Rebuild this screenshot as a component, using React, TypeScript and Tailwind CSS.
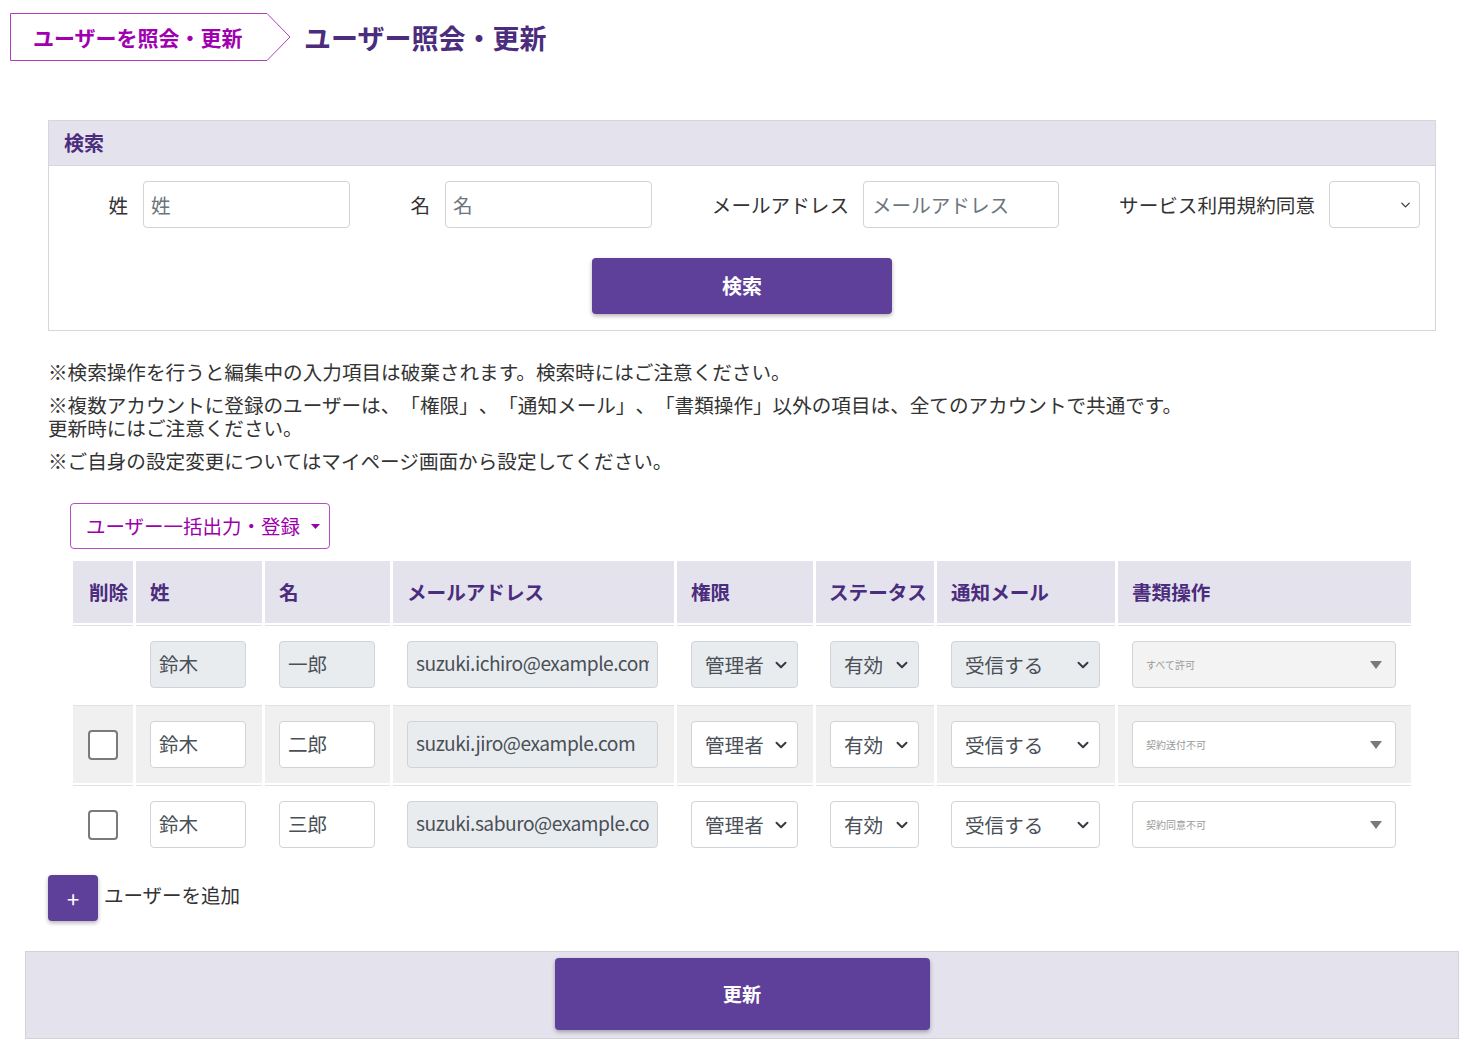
import { ChevronDown } from 'lucide-react';

const purple = 'bg-[#5e3f9a]';

type Row = {
  sei: string;
  mei: string;
  email: string;
  doc: string;
  self?: boolean;
};

const rows: Row[] = [
  { sei: '鈴木', mei: '一郎', email: 'suzuki.ichiro@example.com', doc: 'すべて許可', self: true },
  { sei: '鈴木', mei: '二郎', email: 'suzuki.jiro@example.com', doc: '契約送付不可' },
  { sei: '鈴木', mei: '三郎', email: 'suzuki.saburo@example.com', doc: '契約同意不可' },
];

const cols = 'grid grid-cols-[60px_126px_125px_281px_136px_118px_178px_293px] gap-x-[3px]';

const Select = ({ value, width, disabled }: { value: string; width: string; disabled?: boolean }) => (
  <div className={`relative ${width} h-[47px]`}>
    <select
      disabled={disabled}
      defaultValue={value}
      className={`w-full h-full appearance-none rounded-[4px] border border-[#ced4da] pl-[13px] pr-[30px] text-[19.6px] text-[#495057] outline-none ${disabled ? 'bg-[#e9ecef]' : 'bg-white'}`}
    >
      <option>{value}</option>
    </select>
    <ChevronDown className="absolute right-[8px] top-1/2 -translate-y-1/2 w-[18px] h-[18px] text-[#343a40] pointer-events-none" strokeWidth={2.6} />
  </div>
);

const DocSelect = ({ value, disabled }: { value: string; disabled?: boolean }) => (
  <div
    className={`relative w-[264px] h-[47px] rounded-[4px] border border-[#d3d3d8] flex items-center pl-[13px] ${disabled ? 'bg-[#f3f3f3]' : 'bg-white'}`}
  >
    <span className="text-[10px] text-[#999]">{value}</span>
    <svg className="absolute right-[13px] top-1/2 -translate-y-1/2" width="12" height="8" viewBox="0 0 12 8">
      <polygon points="0,0 12,0 6,8" fill="#7a7a7a" />
    </svg>
  </div>
);

const TextInput = ({
  value,
  width,
  disabled,
  narrow,
}: {
  value: string;
  width: string;
  disabled?: boolean;
  narrow?: boolean;
}) => (
  <input
    defaultValue={value}
    disabled={disabled}
    className={`${width} h-[47px] rounded-[4px] border border-[#ced4da] px-[8px] pb-[3px] text-[#495057] outline-none ${narrow ? 'text-[19.2px] tracking-[-0.5px]' : 'text-[19.6px]'} ${disabled ? 'bg-[#e9ecef]' : 'bg-white'}`}
  />
);

const App = () => {
  return (
    <div className="min-h-screen bg-white text-[#333] font-['Noto_Sans_CJK_JP','Noto_Sans',sans-serif] [text-spacing-trim:space-all]">
      {/* Page header */}
      <header className="flex items-center pl-[10px] pt-[13px]">
        <div className="relative w-[281px] h-[48px]">
          <svg className="absolute inset-0" width="281" height="48" viewBox="0 0 281 48">
            <polygon points="0.5,0.5 257,0.5 280,24 257,47.5 0.5,47.5" fill="none" stroke="#b23dc2" strokeWidth="1" />
          </svg>
          <span className="relative block pl-[23px] leading-[48px] text-[21px] font-bold text-[#a000b0]">
            ユーザーを照会・更新
          </span>
        </div>
        <h1 className="ml-[13px] text-[27px] font-bold text-[#4b2c7d] leading-none">ユーザー照会・更新</h1>
      </header>

      <main className="ml-[25px] w-[1434px] mt-[59px]">
        <div className="px-[23px]">
          {/* Search panel */}
          <section className="border border-[#d6d6dc]">
            <div className="h-[45px] bg-[#e4e3ed] border-b border-[#d6d6dc] flex items-center px-[15px] text-[20px] font-bold text-[#4b2c7d]">
              検索
            </div>
            <div className="pt-[15px] pb-[16px]">
              <div className="flex items-center text-[19.6px]">
                <label className="w-[79px] text-right">姓</label>
                <input placeholder="姓" className="ml-[15px] w-[207px] h-[47px] rounded-[4px] border border-[#ced4da] px-[7px] placeholder:text-[#6c757d] outline-none" />
                <label className="w-[80px] text-right">名</label>
                <input placeholder="名" className="ml-[15px] w-[207px] h-[47px] rounded-[4px] border border-[#ced4da] px-[7px] placeholder:text-[#6c757d] outline-none" />
                <label className="w-[197px] text-right">メールアドレス</label>
                <input placeholder="メールアドレス" className="ml-[14px] w-[196px] h-[47px] rounded-[4px] border border-[#ced4da] px-[8px] placeholder:text-[#6c757d] outline-none" />
                <label className="w-[256px] text-right">サービス利用規約同意</label>
                <div className="relative ml-[14px] w-[91px] h-[47px]">
                  <select className="w-full h-full appearance-none rounded-[4px] border border-[#ced4da] bg-white outline-none">
                    <option></option>
                  </select>
                  <ChevronDown className="absolute right-[7px] top-1/2 -translate-y-1/2 w-[15px] h-[15px] text-[#343a40] pointer-events-none" strokeWidth={2} />
                </div>
              </div>
              <div className="flex justify-center mt-[30px]">
                <button className={`w-[300px] h-[56px] rounded-[4px] ${purple} text-white text-[20px] font-bold shadow-[0_2px_4px_rgba(0,0,0,0.3)]`}>
                  検索
                </button>
              </div>
            </div>
          </section>

          {/* Notes */}
          <div className="mt-[29px] text-[19.6px] leading-[23px] text-[#333]">
            <p className="mb-[10px]">※検索操作を行うと編集中の入力項目は破棄されます。検索時にはご注意ください。</p>
            <p className="mb-[10px]">
              ※複数アカウントに登録のユーザーは、「権限」、「通知メール」、「書類操作」以外の項目は、全てのアカウントで共通です。
              <br />
              更新時にはご注意ください。
            </p>
            <p>※ご自身の設定変更についてはマイページ画面から設定してください。</p>
          </div>

          {/* User table */}
          <div className="px-[22px] mt-[31px]">
            <button className="h-[46px] pl-[15px] pr-[9px] rounded-[4px] border border-[#b34ec2] bg-white flex items-center text-[19.5px] text-[#9c00ab]">
              ユーザー一括出力・登録
              <svg className="ml-[11px]" width="9" height="5" viewBox="0 0 9 5">
                <polygon points="0,0 9,0 4.5,5" fill="#9c00ab" />
              </svg>
            </button>

            <div className="mt-[12px] ml-[3px] flex flex-col gap-y-[2px]">
              <div className={`${cols} h-[62px] text-[19.6px] font-bold text-[#4b2c7d]`}>
                {['削除', '姓', '名', 'メールアドレス', '権限', 'ステータス', '通知メール', '書類操作'].map((h) => (
                  <div key={h} className={`bg-[#e4e3ed] flex items-center ${h === '削除' ? 'pl-[16px]' : h === 'ステータス' ? 'pl-[13px]' : 'pl-[14px]'}`}>
                    {h}
                  </div>
                ))}
              </div>

              {rows.map((r, i) => {
                const bg = i === 1 ? 'bg-[#f0f0f0]' : 'bg-white';
                const cell = `${bg} border-t border-[#dee2e6] h-[78px] flex items-center px-[14px]`;
                return (
                  <div key={r.email} className={cols}>
                    <div className={`${cell} justify-center !px-0`}>
                      {!r.self && (
                        <input
                          type="checkbox"
                          className="appearance-none w-[30px] h-[30px] rounded-[4px] border-2 border-[#7a7a7a] bg-white"
                        />
                      )}
                    </div>
                    <div className={cell}>
                      <TextInput value={r.sei} width="w-[96px]" disabled={r.self} />
                    </div>
                    <div className={cell}>
                      <TextInput value={r.mei} width="w-[96px]" disabled={r.self} />
                    </div>
                    <div className={cell}>
                      <TextInput value={r.email} width="w-[251px]" disabled narrow />
                    </div>
                    <div className={cell}>
                      <Select value="管理者" width="w-[107px]" disabled={r.self} />
                    </div>
                    <div className={cell}>
                      <Select value="有効" width="w-[89px]" disabled={r.self} />
                    </div>
                    <div className={cell}>
                      <Select value="受信する" width="w-[149px]" disabled={r.self} />
                    </div>
                    <div className={cell}>
                      <DocSelect value={r.doc} disabled={r.self} />
                    </div>
                  </div>
                );
              })}
            </div>
          </div>

          {/* Add user */}
          <div className="mt-[12px] flex items-center">
            <button className={`w-[50px] h-[46px] rounded-[4px] ${purple} text-white text-[22px] leading-none shadow-[0_2px_4px_rgba(0,0,0,0.3)]`}>
              +
            </button>
            <span className="ml-[6px] mb-[6px] text-[19.5px] text-[#333]">ユーザーを追加</span>
          </div>
        </div>

        {/* Footer */}
        <footer className="mt-[30px] bg-[#e3e2ed] border border-[#d2d2da] pt-[6px] pb-[8px] flex justify-center">
          <button className={`w-[375px] h-[72px] rounded-[4px] ${purple} text-white text-[19.2px] font-bold shadow-[0_2px_4px_rgba(0,0,0,0.3)]`}>
            更新
          </button>
        </footer>
      </main>
    </div>
  );
};

export default App;
